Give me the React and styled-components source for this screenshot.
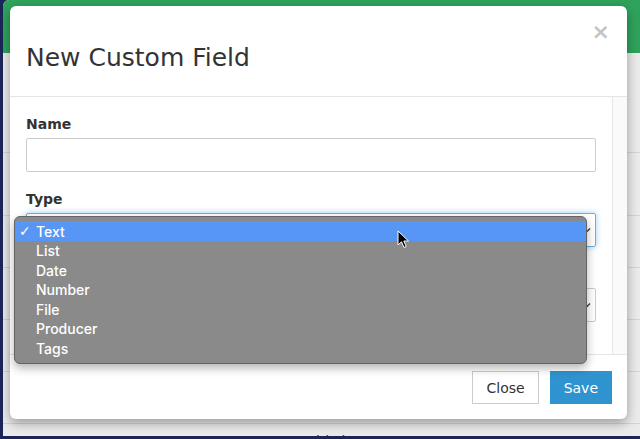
import React from "react";
import styled, { createGlobalStyle } from "styled-components";

const GlobalStyle = createGlobalStyle`
  html, body {
    margin: 0;
    padding: 0;
    background: #1b2558;
  }
  body {
    font-family: "DejaVu Sans", Verdana, sans-serif;
  }
  * {
    box-sizing: border-box;
  }
`;

const Frame = styled.div`
  position: relative;
  width: 640px;
  height: 439px;
  overflow: hidden;
  background: #1b2558;
  padding: 0 0 3px 3px;
`;

const Page = styled.div`
  height: 100%;
  background: #ebebeb;
  border-top-left-radius: 6px;
  overflow: hidden;
  display: flex;
  flex-direction: column;
`;

const TopBar = styled.div`
  height: 53px;
  flex: none;
  background: #2fa35d;
`;

const Filters = styled.div`
  height: 100px;
  flex: none;
  border-bottom: 1px solid #d4d4d4;
`;

const TableRow = styled.div`
  height: ${props => props.height}px;
  flex: none;
  border-bottom: 1px solid #d4d4d4;
  display: flex;
  padding-top: 9px;
  font-size: 14px;
  color: #333;
`;

const Cell = styled.div`
  width: ${props => props.width}px;
  flex: none;
`;

const Modal = styled.div`
  position: absolute;
  top: 6px;
  left: 10px;
  width: 617px;
  height: 413px;
  background: #fff;
  border-radius: 6px;
  box-shadow: 0 4px 12px rgba(0, 0, 0, 0.35);
  display: flex;
  flex-direction: column;
  overflow: hidden;
`;

const Header = styled.div`
  height: 91px;
  flex: none;
  border-bottom: 1px solid #e5e5e5;
  display: flex;
  justify-content: space-between;
  align-items: flex-start;
  padding: 0 17px 0 16px;
`;

const Title = styled.h4`
  margin: 38px 0 0;
  font-size: 25px;
  line-height: 27px;
  font-weight: normal;
  color: #333;
`;

const CloseX = styled.button`
  margin-top: 15px;
  padding: 0;
  border: 0;
  background: none;
  font-family: "DejaVu Sans", sans-serif;
  font-size: 22px;
  font-weight: bold;
  line-height: 22px;
  color: #c4c4c4;
`;

const Body = styled.div`
  height: 257px;
  flex: none;
  display: flex;
`;

const Content = styled.div`
  flex: 1;
  padding: 17px 16px 0;
  overflow: hidden;
`;

const ScrollTrack = styled.div`
  width: 15px;
  flex: none;
  background: #fafafa;
  border-left: 1px solid #e6e6e6;
`;

const Group = styled.div`
  margin-bottom: 17px;
`;

const Label = styled.div`
  height: 20px;
  font-size: 14px;
  line-height: 20px;
  font-weight: bold;
  color: #333;
  margin-bottom: 4px;
`;

const Input = styled.div`
  height: 34px;
  border: 1px solid #ccc;
  border-radius: 2px;
  background: #fff;
`;

const Select = styled.div`
  height: 34px;
  border: 1px solid ${props => (props.focused ? "#66afe9" : "#ccc")};
  border-radius: 2px;
  background: #fff;
  box-shadow: ${props =>
    props.focused ? "0 0 6px rgba(102, 175, 233, 0.6)" : "none"};
  display: flex;
  align-items: center;
  justify-content: flex-end;
  padding-right: 3px;
`;

const Footer = styled.div`
  height: 65px;
  flex: none;
  border-top: 1px solid #e5e5e5;
  display: flex;
  justify-content: flex-end;
  align-items: flex-start;
  gap: 11px;
  padding: 16px 15px 0;
`;

const Button = styled.button`
  height: 33px;
  padding: 0 13px;
  font-family: "DejaVu Sans", sans-serif;
  font-size: 14px;
  border-radius: 0;
  border: 1px solid ${props => (props.primary ? "#2f93cf" : "#ccc")};
  background: ${props => (props.primary ? "#2f93cf" : "#fff")};
  color: ${props => (props.primary ? "#fff" : "#333")};
`;

const Popup = styled.div`
  position: absolute;
  top: 216px;
  left: 14px;
  width: 573px;
  height: 148px;
  background: #8a8a8a;
  border: 1px solid #646464;
  border-radius: 6px;
  box-shadow: 0 4px 10px rgba(0, 0, 0, 0.3);
  padding: 4px 0 5px;
  overflow: hidden;
`;

const Option = styled.div`
  height: ${props => (props.selected ? 20 : 19.5)}px;
  display: flex;
  align-items: center;
  padding-left: 4px;
  background: ${props => (props.selected ? "#5796f5" : "transparent")};
  font-family: Inter, "Liberation Sans", sans-serif;
  font-size: 14px;
  font-weight: 500;
  color: #fff;
`;

const Check = styled.span`
  width: 17px;
  flex: none;
  font-family: "DejaVu Sans", sans-serif;
  font-size: 14px;
`;

const Cursor = styled.svg`
  position: absolute;
  left: 397px;
  top: 230px;
`;

const Chevron = () => (
  <svg width="10" height="10" viewBox="0 0 10 10">
    <path d="M2 3.5 L5 6.5 L8 3.5" fill="none" stroke="#444" strokeWidth="1.5" />
  </svg>
);

const options = ["Text", "List", "Date", "Number", "File", "Producer", "Tags"];

const App = () => (
  <>
    <GlobalStyle />
    <Frame>
      <Page>
        <TopBar />
        <Filters />
        <TableRow height={63} />
        <TableRow height={52} />
        <TableRow height={52} />
        <TableRow height={52} />
        <TableRow height={52} />
        <TableRow height={52}>
          <Cell width={125}></Cell>
          <Cell width={167}>Text</Cell>
          <Cell width={200}>Multi Line Input</Cell>
        </TableRow>
      </Page>

      <Modal>
        <Header>
          <Title>New Custom Field</Title>
          <CloseX>×</CloseX>
        </Header>
        <Body>
          <Content>
            <Group>
              <Label>Name</Label>
              <Input />
            </Group>
            <Group>
              <Label>Type</Label>
              <Select focused>
                <Chevron />
              </Select>
            </Group>
            <Group>
              <Label />
              <Select>
                <Chevron />
              </Select>
            </Group>
          </Content>
          <ScrollTrack />
        </Body>
        <Footer>
          <Button>Close</Button>
          <Button primary>Save</Button>
        </Footer>
      </Modal>

      <Popup>
        {options.map((name, i) => (
          <Option key={name} selected={i === 0}>
            <Check>{i === 0 ? "✓" : ""}</Check>
            {name}
          </Option>
        ))}
      </Popup>

      <Cursor width="14" height="20" viewBox="0 0 14 20">
        <path
          d="M1 1 L1 15 L4.5 11.8 L7 17.5 L9.2 16.5 L6.8 11 L11.5 11 Z"
          fill="#000"
          stroke="#fff"
          strokeWidth="1"
          strokeLinejoin="round"
        />
      </Cursor>
    </Frame>
  </>
);

export default App;
